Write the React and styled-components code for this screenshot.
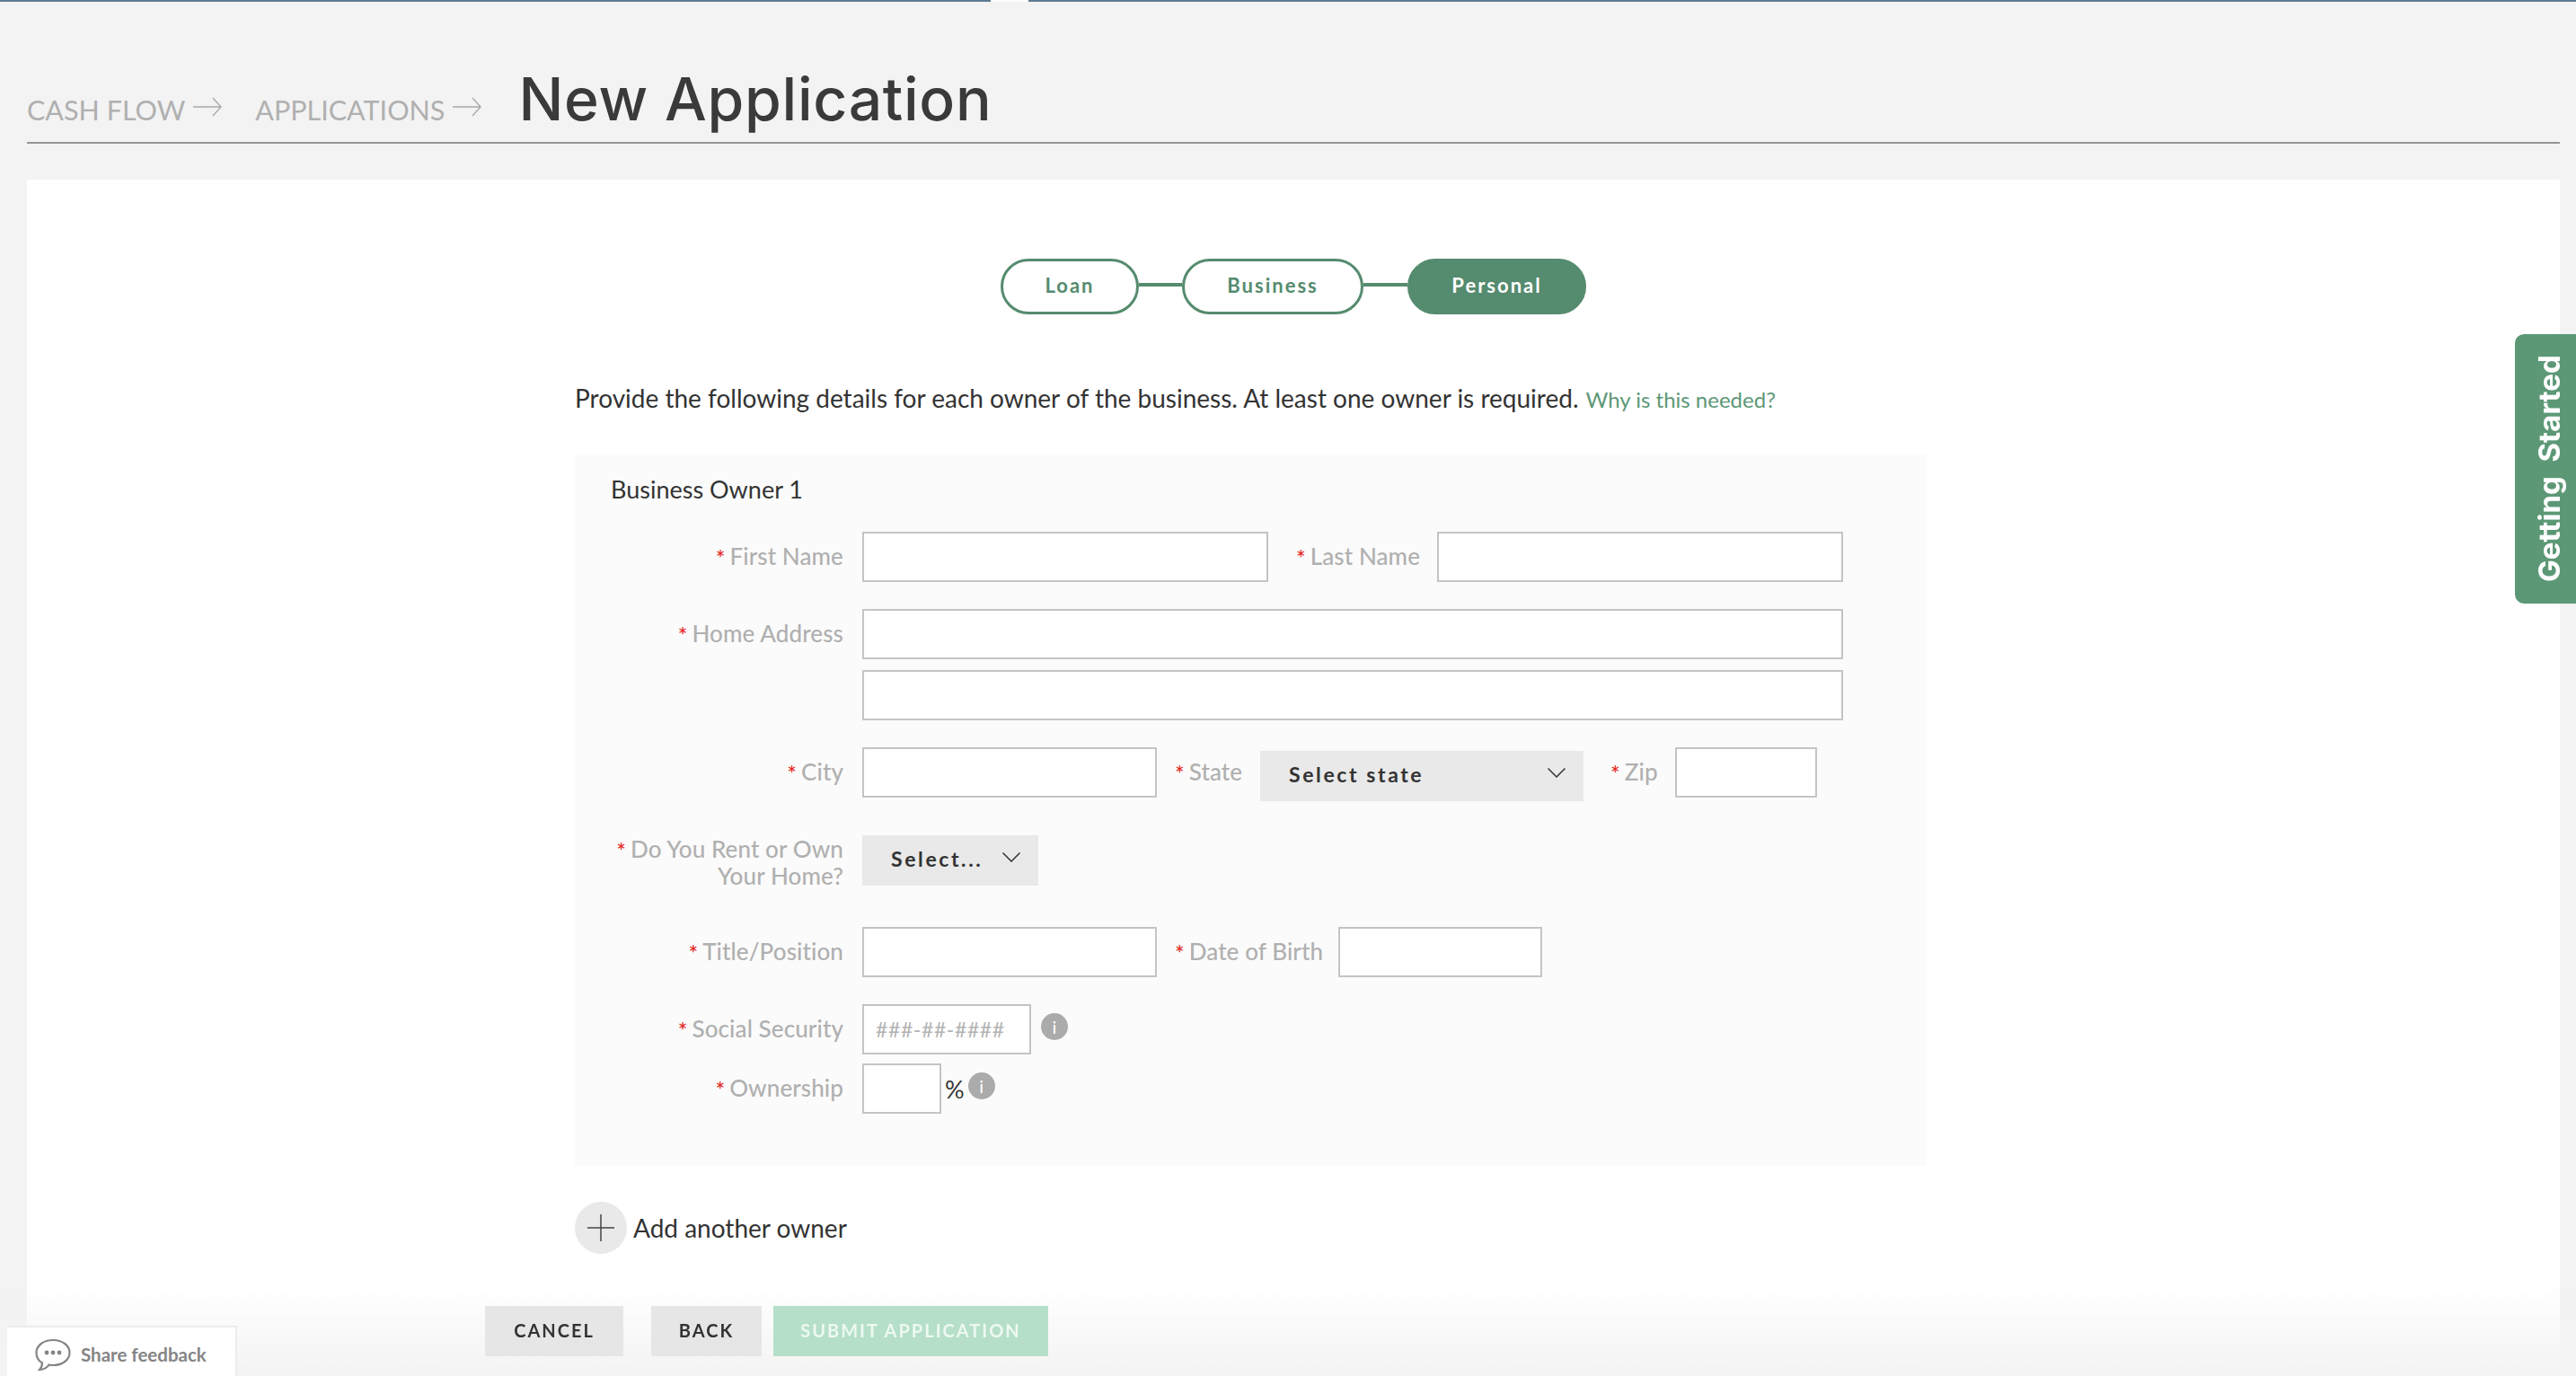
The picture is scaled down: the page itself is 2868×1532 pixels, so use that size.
import React from "react";
import styled, { createGlobalStyle } from "styled-components";

const FONT = `Lato, "Open Sans", "Liberation Sans", sans-serif`;

const GlobalStyle = createGlobalStyle`
  html, body {
    margin: 0;
    height: 1532px;
    overflow: hidden;
    background: #f3f3f3;
    font-family: ${FONT};
  }
  * { box-sizing: border-box; }
`;

const TopBar = styled.div`
  position: relative;
  height: 2px;
  background: #5f7b93;
`;

const Notch = styled.span`
  position: absolute;
  left: 1103px;
  top: 0;
  width: 42px;
  height: 2px;
  background: #fff;
`;

const Header = styled.header`
  display: flex;
  align-items: baseline;
  height: 158px;
  margin: 0 18px 0 30px;
  padding-top: 68px;
  border-bottom: 2px solid #949494;
`;

const Crumb = styled.span`
  display: inline-flex;
  align-items: baseline;
  margin-right: ${(p) => p.$gap}px;
  font-size: 30.5px;
  font-weight: 400;
  color: #b0b0b0;
  white-space: nowrap;
`;

const CrumbArrow = styled.svg`
  width: 32px;
  height: 22px;
  margin-left: 9px;
  align-self: center;
  position: relative;
  top: -3px;
`;

const Title = styled.h1`
  margin: 0;
  font-family: Inter, ${FONT};
  font-size: 66px;
  font-weight: 500;
  line-height: 80px;
  letter-spacing: 0.7px;
  color: #3a3a3a;
  white-space: nowrap;
`;

const Card = styled.main`
  margin: 40px 18px 0 30px;
  height: 1332px;
  background: #fff;
  display: flex;
  flex-direction: column;
`;

const Stepper = styled.div`
  display: flex;
  justify-content: center;
  margin-top: 88px;
`;

const Step = styled.div`
  display: flex;
  align-items: center;
  justify-content: center;
  width: ${(p) => p.$w}px;
  height: 62px;
  padding-bottom: 3px;
  border: 3px solid #558b6e;
  border-radius: 31px;
  background: ${(p) => (p.$active ? "#558b6e" : "#fff")};
  color: ${(p) => (p.$active ? "#fff" : "#558b6e")};
  font-size: 22px;
  font-weight: 700;
  letter-spacing: 2px;
`;

const Connector = styled.span`
  width: ${(p) => p.$w}px;
  height: 4px;
  margin-top: 27px;
  background: #558b6e;
`;

const Content = styled.section`
  margin-left: 610px;
`;

const Intro = styled.p`
  margin: 77px 0 0;
  height: 79px;
  font-size: 28px;
  line-height: 32px;
  color: #333;
  white-space: nowrap;
`;

const WhyLink = styled.a`
  margin-left: 8px;
  font-size: 24px;
  color: #5c9876;
`;

const Panel = styled.div`
  width: 1505px;
  height: 792px;
  padding: 21px 0 0 40px;
  background: #fbfbfb;
`;

const PanelTitle = styled.h2`
  margin: 0;
  height: 65px;
  font-size: 27px;
  font-weight: 400;
  line-height: 36px;
  color: #333;
`;

const Row = styled.div`
  display: flex;
  align-items: flex-start;
  margin-top: ${(p) => p.$mt || 0}px;
`;

const Label = styled.label`
  flex: none;
  width: ${(p) => p.$w || 259}px;
  margin-left: ${(p) => p.$ml || 0}px;
  margin-right: ${(p) => p.$mr || 21}px;
  padding-top: ${(p) => (p.$tall ? 0 : 12)}px;
  font-size: 26px;
  line-height: 30px;
  font-weight: 500;
  letter-spacing: 0.1px;
  color: #b0b0b0;
  text-align: right;
  white-space: ${(p) => (p.$tall ? "normal" : "nowrap")};
`;

const Star = styled.span`
  margin-right: 5px;
  color: #e3281f;
  font-size: 25px;
  line-height: 20px;
  vertical-align: -2px;
`;

const TextInput = styled.input`
  flex: none;
  display: block;
  width: ${(p) => p.$w}px;
  height: 56px;
  padding: 0 13px;
  border: 2px solid #c4c4c4;
  border-radius: 0;
  background: #fff;
  font-family: ${FONT};
  font-size: 23px;
  letter-spacing: 0.6px;
  outline: none;
  &::placeholder {
    color: #b3b3b3;
    opacity: 1;
  }
`;

const SelectBox = styled.div`
  flex: none;
  display: flex;
  align-items: center;
  justify-content: space-between;
  width: ${(p) => p.$w}px;
  height: 56px;
  margin-top: ${(p) => p.$mt || 0}px;
  padding: 0 20px 5px 32px;
  background: #e9e9e9;
  font-size: 23px;
  font-weight: 700;
  letter-spacing: 2.6px;
  color: #333;
`;

const Chevron = styled.svg`
  width: 20px;
  height: 11px;
  margin-top: -3px;
`;

const Info = styled.span`
  flex: none;
  display: flex;
  align-items: center;
  justify-content: center;
  width: 30px;
  height: 30px;
  margin-top: 10px;
  margin-left: ${(p) => p.$ml}px;
  border-radius: 50%;
  background: #ababab;
  color: #fff;
  font-size: 20px;
  font-weight: 400;
`;

const Percent = styled.span`
  margin: 14px 0 0 4px;
  font-size: 27px;
  line-height: 30px;
  color: #333;
`;

const AddOwner = styled.div`
  display: flex;
  align-items: center;
  gap: 7px;
  margin-top: 40px;
  font-size: 28px;
  color: #333;
`;

const AddCircle = styled.span`
  display: flex;
  align-items: center;
  justify-content: center;
  width: 58px;
  height: 58px;
  border-radius: 50%;
  background: #e9e9e9;
`;

const Actions = styled.div`
  position: relative;
  z-index: 1;
  display: flex;
  margin: 58px 0 0 510px;
`;

const ActionButton = styled.button`
  width: ${(p) => p.$w}px;
  height: 56px;
  margin-right: ${(p) => p.$mr || 0}px;
  padding: 0 0 3px;
  border: none;
  background: ${(p) => (p.$primary ? "#b5dfc8" : "#e6e6e6")};
  color: ${(p) => (p.$primary ? "#edf8f2" : "#333")};
  font-family: ${FONT};
  font-size: 20px;
  font-weight: 700;
  letter-spacing: 2px;
`;

const BottomFade = styled.div`
  position: fixed;
  left: 0;
  right: 0;
  bottom: 0;
  height: 100px;
  background: linear-gradient(rgba(243, 243, 243, 0), #f3f3f3);
  pointer-events: none;
`;

const Feedback = styled.div`
  position: fixed;
  z-index: 2;
  left: 8px;
  bottom: 0;
  display: flex;
  align-items: center;
  gap: 11px;
  width: 256px;
  height: 56px;
  padding: 6px 0 0 31px;
  background: #fff;
  border: 2px solid #ececec;
  border-bottom: none;
  border-left: none;
  font-size: 20.5px;
  font-weight: 700;
  color: #858585;
`;

const GettingStarted = styled.aside`
  position: fixed;
  z-index: 2;
  right: 0;
  top: 372px;
  display: flex;
  align-items: center;
  justify-content: center;
  width: 68px;
  height: 300px;
  padding-right: 8px;
  border-radius: 0 10px 10px 0;
  background: #5c9876;
  color: #fff;
  font-family: Inter, sans-serif;
  font-size: 33px;
  font-weight: 700;
  writing-mode: vertical-rl;
  transform: rotate(180deg);
  white-space: pre;
`;

const Arrow = () => (
  <CrumbArrow viewBox="0 0 32 22" fill="none" stroke="#a9a9a9" strokeWidth="1.4">
    <path d="M0 11h31M22 1l9 10-9 10" />
  </CrumbArrow>
);

const Req = ({ children, ...rest }) => (
  <Label {...rest}>
    <Star>*</Star>
    {children}
  </Label>
);

const Select = ({ w, mt, children }) => (
  <SelectBox $w={w} $mt={mt}>
    {children}
    <Chevron viewBox="0 0 20 11" fill="none" stroke="#333" strokeWidth="1.5">
      <path d="M0.5 0.5L10 10l9.5-9.5" />
    </Chevron>
  </SelectBox>
);

export default function App() {
  return (
    <>
      <GlobalStyle />
      <TopBar>
        <Notch />
      </TopBar>
      <Header>
        <Crumb $gap={37}>
          CASH FLOW
          <Arrow />
        </Crumb>
        <Crumb $gap={41}>
          APPLICATIONS
          <Arrow />
        </Crumb>
        <Title>New Application</Title>
      </Header>
      <Card>
        <Stepper>
          <Step $w={154}>Loan</Step>
          <Connector $w={48} />
          <Step $w={202}>Business</Step>
          <Connector $w={49} />
          <Step $w={199} $active>
            Personal
          </Step>
        </Stepper>
        <Content>
          <Intro>
            Provide the following details for each owner of the business. At
            least one owner is required.
            <WhyLink>Why is this needed?</WhyLink>
          </Intro>
          <Panel>
            <PanelTitle>Business Owner 1</PanelTitle>
            <Row>
              <Req>First Name</Req>
              <TextInput $w={452} />
              <Req $w={137} $ml={31} $mr={20}>
                Last Name
              </Req>
              <TextInput $w={452} />
            </Row>
            <Row $mt={30}>
              <Req>Home Address</Req>
              <TextInput $w={1092} />
            </Row>
            <Row $mt={12}>
              <Label />
              <TextInput $w={1092} />
            </Row>
            <Row $mt={30}>
              <Req>City</Req>
              <TextInput $w={328} />
              <Req $w={75} $ml={20} $mr={20}>
                State
              </Req>
              <Select w={360} mt={4}>
                Select state
              </Select>
              <Req $w={51} $ml={30}>
                Zip
              </Req>
              <TextInput $w={158} />
            </Row>
            <Row $mt={38}>
              <Req $tall>Do You Rent or Own Your Home?</Req>
              <Select w={196}>Select...</Select>
            </Row>
            <Row $mt={42}>
              <Req>Title/Position</Req>
              <TextInput $w={328} />
              <Req $w={160} $ml={20} $mr={22}>
                Date of Birth
              </Req>
              <TextInput $w={227} />
            </Row>
            <Row $mt={30}>
              <Req>Social Security</Req>
              <TextInput $w={188} placeholder="###-##-####" />
              <Info $ml={11}>i</Info>
            </Row>
            <Row $mt={10}>
              <Req>Ownership</Req>
              <TextInput $w={88} />
              <Percent>%</Percent>
              <Info $ml={4}>i</Info>
            </Row>
          </Panel>
          <AddOwner>
            <AddCircle>
              <svg width="30" height="30" viewBox="0 0 30 30" stroke="#444" strokeWidth="1.5">
                <path d="M15 0v30M0 15h30" />
              </svg>
            </AddCircle>
            Add another owner
          </AddOwner>
        </Content>
        <Actions>
          <ActionButton $w={154} $mr={31}>
            CANCEL
          </ActionButton>
          <ActionButton $w={123} $mr={13}>
            BACK
          </ActionButton>
          <ActionButton $w={306} $primary>
            SUBMIT APPLICATION
          </ActionButton>
        </Actions>
      </Card>
      <BottomFade />
      <GettingStarted>Getting  Started</GettingStarted>
      <Feedback>
        <svg width="40" height="36" viewBox="0 0 40 36" fill="none" stroke="#858585" strokeWidth="2.2">
          <path d="M8 27.5C3.500 25 1.500 20.500 1.500 16 1.500 8 9.500 2 20 2s18.500 6 18.500 14S30.500 30 20 30c-1.500 0-3-.1-4.500-.5C14 32 10.500 34.500 5 35c2-2 3-4.500 3-7.500z" />
          <circle cx="13" cy="16" r="2.4" fill="#858585" stroke="none" />
          <circle cx="20" cy="16" r="2.4" fill="#858585" stroke="none" />
          <circle cx="27" cy="16" r="2.4" fill="#858585" stroke="none" />
        </svg>
        Share feedback
      </Feedback>
    </>
  );
}
